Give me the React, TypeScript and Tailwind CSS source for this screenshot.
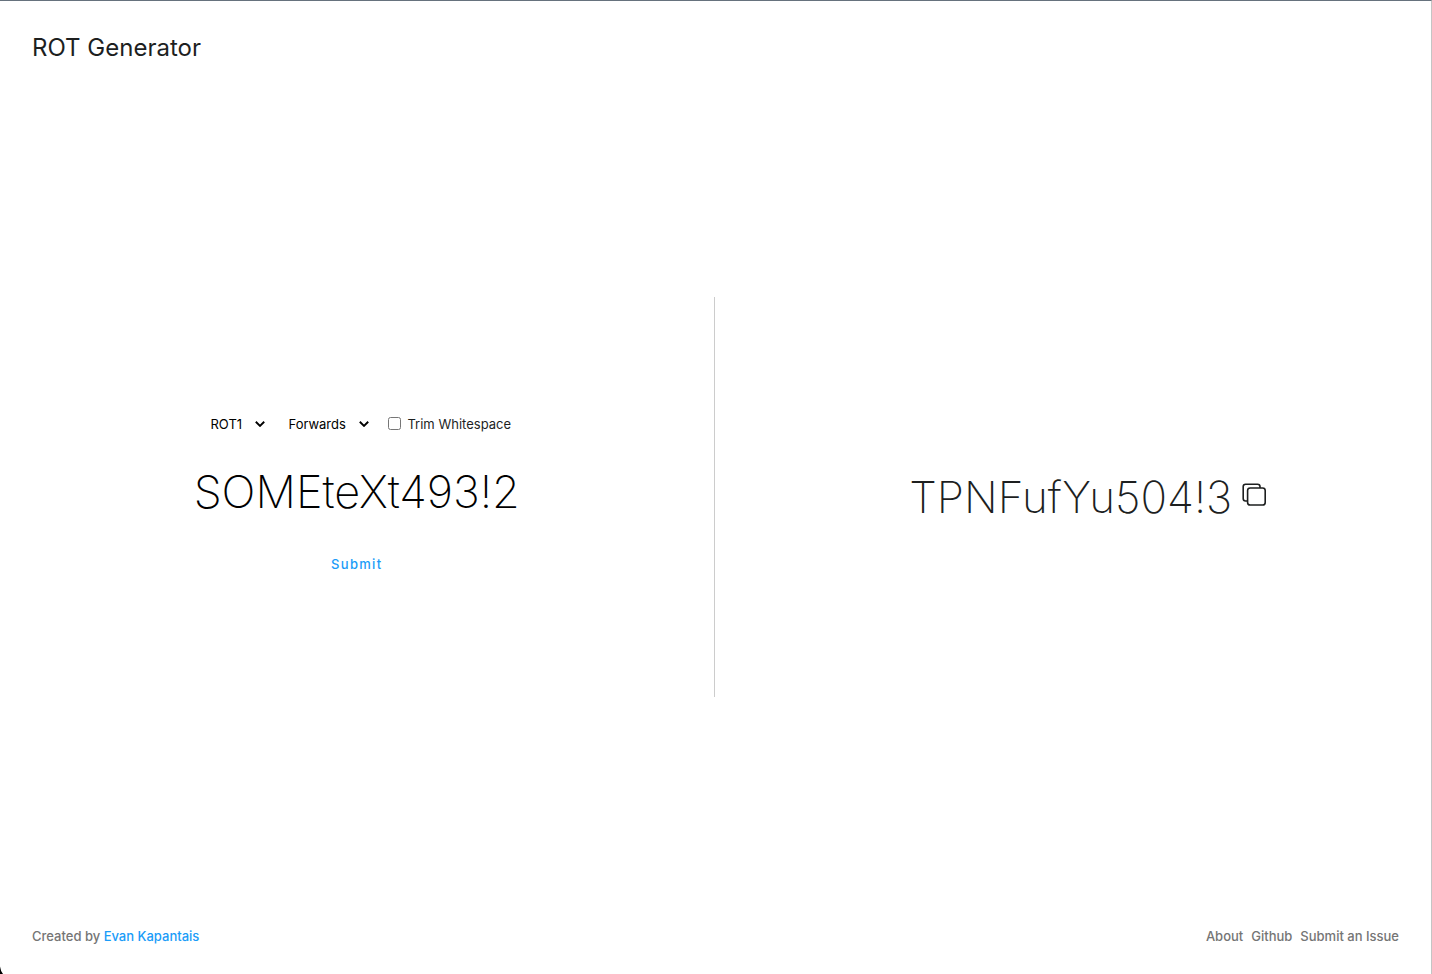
import { useState } from "react";
import type { FormEvent, SelectHTMLAttributes } from "react";

type Direction = "Forwards" | "Backwards";

function rotate(text: string, amount: number, direction: Direction, trim: boolean) {
  const source = trim ? text.replace(/\s+/g, "") : text;
  const shift = direction === "Forwards" ? amount : -amount;
  const turn = (code: number, base: number, size: number) =>
    String.fromCharCode(((((code - base + shift) % size) + size) % size) + base);
  return source.replace(/[a-zA-Z0-9]/g, (ch) => {
    const code = ch.charCodeAt(0);
    if (/[0-9]/.test(ch)) return turn(code, 48, 10);
    return /[a-z]/.test(ch) ? turn(code, 97, 26) : turn(code, 65, 26);
  });
}

function Select({ className, ...props }: SelectHTMLAttributes<HTMLSelectElement> & { className: string }) {
  return (
    <span className={`relative flex items-center ${className}`}>
      <select
        {...props}
        className="w-full cursor-pointer appearance-none bg-transparent text-black outline-none"
      />
      <svg viewBox="0 0 10 6" className="pointer-events-none absolute right-0 h-1.5 w-2.5" fill="none" stroke="black" strokeWidth="1.9">
        <path d="M0.8 0.8L5 4.9L9.2 0.8" />
      </svg>
    </span>
  );
}

function CopyIcon() {
  return (
    <svg viewBox="0 0 24 24" className="h-6 w-6" fill="none" stroke="#1d1f1f" strokeWidth="1.6">
      <path d="M5.5 18H3.6A2.4 2.4 0 0 1 1.2 15.6V3.6A2.4 2.4 0 0 1 3.6 1.2H15.6A2.4 2.4 0 0 1 18 3.6V5" />
      <rect x="5.6" y="5" width="17.6" height="17" rx="2.6" />
    </svg>
  );
}

export default function App() {
  const [text, setText] = useState("SOMEteXt493!2");
  const [amount, setAmount] = useState(1);
  const [direction, setDirection] = useState<Direction>("Forwards");
  const [trim, setTrim] = useState(false);
  const [result, setResult] = useState("TPNFufYu504!3");

  const submit = (event: FormEvent) => {
    event.preventDefault();
    setResult(rotate(text, amount, direction, trim));
  };

  return (
    <div className="relative flex min-h-screen flex-col border-t border-r border-t-[#66727d] border-r-[#c4c4c4] bg-white font-['Inter',sans-serif] text-[13px] leading-5 text-[#1d1f1f]">
      <header className="p-8">
        <h1 className="text-2xl leading-[30px]">ROT Generator</h1>
      </header>

      <main className="grid flex-1 grid-cols-2 items-center pr-0.5">
        <form
          onSubmit={submit}
          className="flex h-[400px] flex-col items-center justify-center border-r border-[#cccccc] pb-1.5"
        >
          <div className="flex items-center pl-2">
            <Select
              aria-label="Rotation"
              className="mr-[23px] w-[55px]"
              value={amount}
              onChange={(e) => setAmount(Number(e.target.value))}
            >
              {Array.from({ length: 25 }, (_, i) => (
                <option key={i} value={i + 1}>{`ROT${i + 1}`}</option>
              ))}
            </Select>
            <Select
              aria-label="Direction"
              className="mr-[19px] w-[81px]"
              value={direction}
              onChange={(e) => setDirection(e.target.value as Direction)}
            >
              <option>Forwards</option>
              <option>Backwards</option>
            </Select>
            <label className="flex items-center gap-1.5">
              <input type="checkbox" checked={trim} onChange={(e) => setTrim(e.target.checked)} className="h-[13px] w-[13px]" />
              Trim Whitespace
            </label>
          </div>
          <input
            type="text"
            aria-label="Text"
            value={text}
            onChange={(e) => setText(e.target.value)}
            className="mt-7 mb-8 w-full text-center text-[45px] leading-[60px] font-extralight text-black outline-none"
          />
          <button type="submit" className="cursor-pointer font-medium tracking-widest text-[#1a9cf8]">
            Submit
          </button>
        </form>

        <section aria-label="Result" className="grid grid-cols-[1fr_auto_1fr] items-center pr-0.5">
          <output className="col-start-2 text-[44px] leading-[60px] font-extralight">{result}</output>
          <button
            type="button"
            aria-label="Copy"
            onClick={() => navigator.clipboard?.writeText(result)}
            className="mb-1 ml-2.5 cursor-pointer justify-self-start"
          >
            <CopyIcon />
          </button>
        </section>
      </main>

      <footer className="flex items-center justify-between px-8 py-7 font-medium text-[#757575]">
        <p>
          Created by{" "}
          <a href="#author" className="text-[#1a9cf8]">
            Evan Kapantais
          </a>
        </p>
        <nav className="flex gap-2">
          <a href="#about">About</a>
          <a href="#github">Github</a>
          <a href="#issues">Submit an Issue</a>
        </nav>
      </footer>

      <svg viewBox="0 0 4 8" className="pointer-events-none absolute bottom-0 left-0 h-2 w-1" aria-hidden="true">
        <path d="M0 0.5Q0.6 5 3 8H0Z" fill="black" />
      </svg>
    </div>
  );
}
